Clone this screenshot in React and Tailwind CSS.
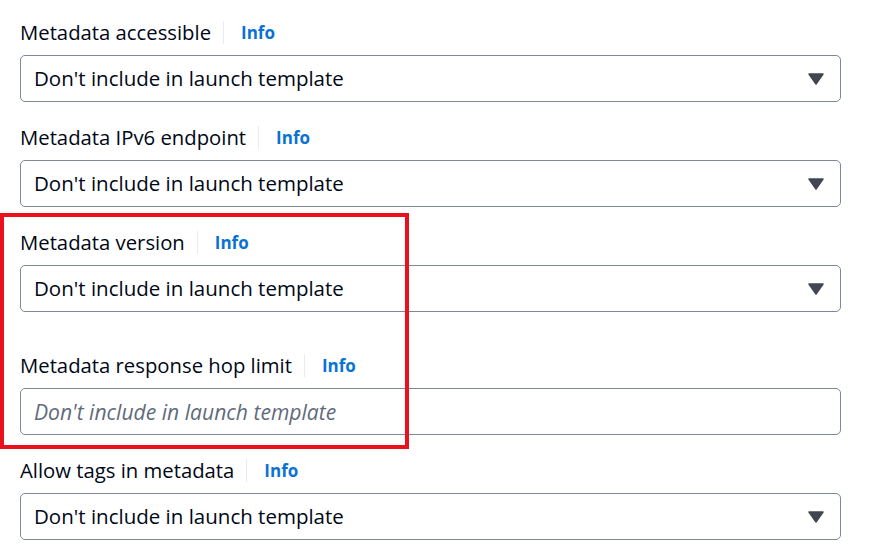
import React from 'react'

const FIELDS = [
  { label: 'Metadata accessible', kind: 'select' },
  { label: 'Metadata IPv6 endpoint', kind: 'select' },
  { label: 'Metadata version', kind: 'select' },
  { label: 'Metadata response hop limit', kind: 'input', spaced: true },
  { label: 'Allow tags in metadata', kind: 'select' },
]

const VALUE = "Don't include in launch template"

function Caret() {
  return (
    <svg width="16" height="12" viewBox="0 0 16 12" className="shrink-0">
      <path d="M1 1h14L8 11z" fill="#424650" stroke="#424650" strokeWidth="1.5" strokeLinejoin="round" />
    </svg>
  )
}

function Field({ label, kind, spaced }) {
  return (
    <div className={spaced ? 'mt-[38px]' : 'mt-[20px] first:mt-0'}>
      <div className="flex items-center h-[30px] mb-[8px]">
        <span className="text-[20.3px] leading-[30px] text-[#000716]">{label}</span>
        <span className="ml-[12px] w-px h-[23px] bg-[#e9ebed]" />
        <span className="ml-[17px] mt-[2px] text-[17px] font-bold text-[#0972d3]">Info</span>
      </div>
      {kind === 'select' ? (
        <div className="flex items-center justify-between h-[47px] border border-[#7d8998] rounded-[5px] pl-[13px] pr-[16px] bg-white">
          <span className="text-[20.5px] text-[#000716]">{VALUE}</span>
          <Caret />
        </div>
      ) : (
        <div className="flex items-center h-[47px] border border-[#7d8998] rounded-[5px] pl-[13px] bg-white">
          <span className="text-[21.1px] italic text-[#5f6b7a]">{VALUE}</span>
        </div>
      )}
    </div>
  )
}

export default function App() {
  return (
    <div
      className="relative w-[872px] h-[554px] bg-white overflow-hidden pl-[20px] pr-[31px] pt-[17px]"
      style={{ fontFamily: '"Open Sans", "Helvetica Neue", Roboto, Arial, sans-serif' }}
    >
      {FIELDS.map((f) => (
        <Field key={f.label} {...f} />
      ))}
      {/* highlight box */}
      <div className="absolute left-0 top-[213px] w-[409px] h-[236px] border-[4px] border-[#e8111d] pointer-events-none" />
    </div>
  )
}
